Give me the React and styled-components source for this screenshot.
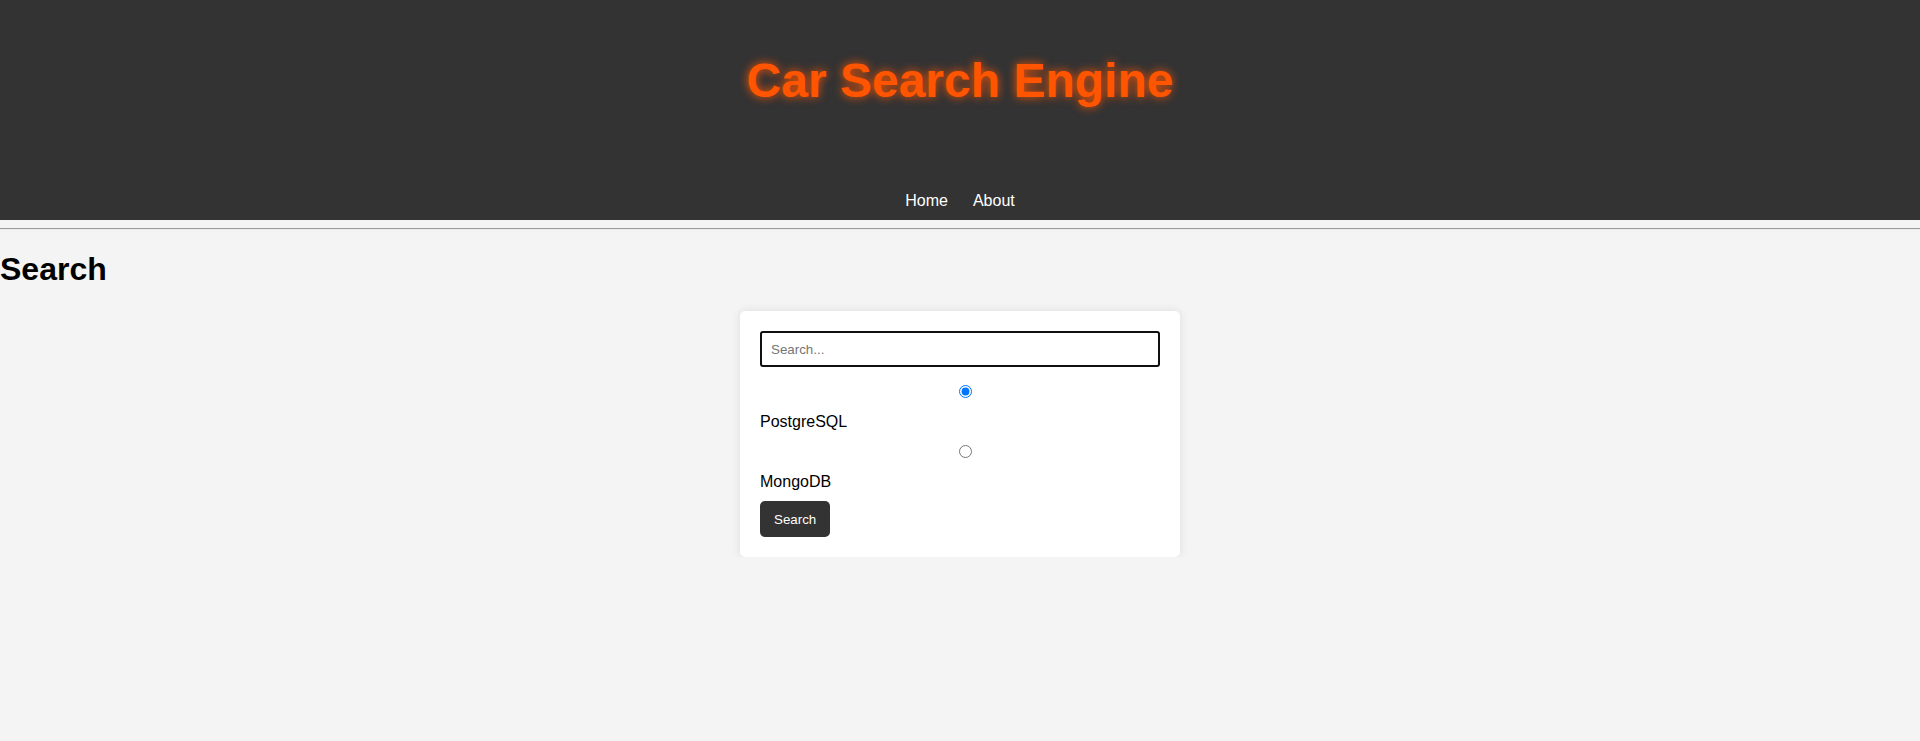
import React from "react";
import styled, { createGlobalStyle } from "styled-components";

const GlobalStyle = createGlobalStyle`
  html, body {
    margin: 0;
    padding: 0;
    background: #f4f4f4;
    font-family: "Liberation Sans", Arial, sans-serif;
    color: #000;
  }
  * { box-sizing: border-box; }
`;

const Header = styled.header`
  background: #333333;
  padding: 53px 0 10px;
  display: flex;
  flex-direction: column;
  align-items: center;
`;

const Title = styled.h1`
  margin: 0;
  font-size: 48px;
  line-height: 55px;
  font-weight: 700;
  color: #ff5500;
  text-shadow: 0 0 10px #ff5500;
`;

const Nav = styled.nav`
  margin-top: 84px;
  display: flex;
  justify-content: center;
  gap: 25px;
  line-height: 18px;
`;

const NavLink = styled.a`
  color: #ffffff;
  text-decoration: none;
  font-size: 16px;
`;

const Rule = styled.hr`
  margin: 8px 0 0;
  height: 0;
  border: 0;
  border-top: 1px solid #9a9a9a;
  border-bottom: 1px solid #ececec;
`;

const PageTitle = styled.h1`
  margin: 21px 0 23px;
  font-size: 32px;
  line-height: 37px;
  font-weight: 700;
`;

const Card = styled.form`
  width: 440px;
  margin: 0 auto;
  background: #ffffff;
  padding: 20px;
  border-radius: 5px;
  box-shadow: 0 0 10px rgba(0, 0, 0, 0.1);
  display: flex;
  flex-direction: column;
  align-items: flex-start;
`;

const SearchInput = styled.input`
  display: block;
  width: 100%;
  height: 36px;
  margin: 0 0 4px;
  padding: 0 9px;
  border: 2px solid #101010;
  border-radius: 3px;
  font-family: "Liberation Sans", Arial, sans-serif;
  font-size: 13.33px;
  color: #000;
  outline: none;
  &::placeholder {
    color: #757575;
  }
`;

const Option = styled.div`
  width: 100%;
  display: flex;
  flex-direction: column;
`;

const RadioRow = styled.div`
  margin-top: 14px;
  padding-left: 10px;
  display: flex;
  justify-content: center;
  height: 13px;
`;

const Radio = styled.input.attrs({ type: "radio" })`
  margin: 0;
  width: 13px;
  height: 13px;
`;

const OptionLabel = styled.label`
  margin-top: 15px;
  font-size: 16px;
  line-height: 18px;
`;

const SubmitButton = styled.button`
  margin-top: 10px;
  height: 36px;
  padding: 0 14px;
  background: #333333;
  color: #ffffff;
  border: none;
  border-radius: 5px;
  font-family: "Liberation Sans", Arial, sans-serif;
  font-size: 13.33px;
  cursor: pointer;
`;

const options = [
  { id: "postgres", label: "PostgreSQL", checked: true },
  { id: "mongo", label: "MongoDB", checked: false },
];

export default function App() {
  return (
    <>
      <GlobalStyle />
      <Header>
        <Title>Car Search Engine</Title>
        <Nav>
          <NavLink href="#">Home</NavLink>
          <NavLink href="#">About</NavLink>
        </Nav>
      </Header>
      <Rule />
      <PageTitle>Search</PageTitle>
      <Card onSubmit={(e) => e.preventDefault()}>
        <SearchInput type="text" placeholder="Search..." />
        {options.map((o) => (
          <Option key={o.id}>
            <RadioRow>
              <Radio id={o.id} name="db" defaultChecked={o.checked} />
            </RadioRow>
            <OptionLabel htmlFor={o.id}>{o.label}</OptionLabel>
          </Option>
        ))}
        <SubmitButton type="submit">Search</SubmitButton>
      </Card>
    </>
  );
}
